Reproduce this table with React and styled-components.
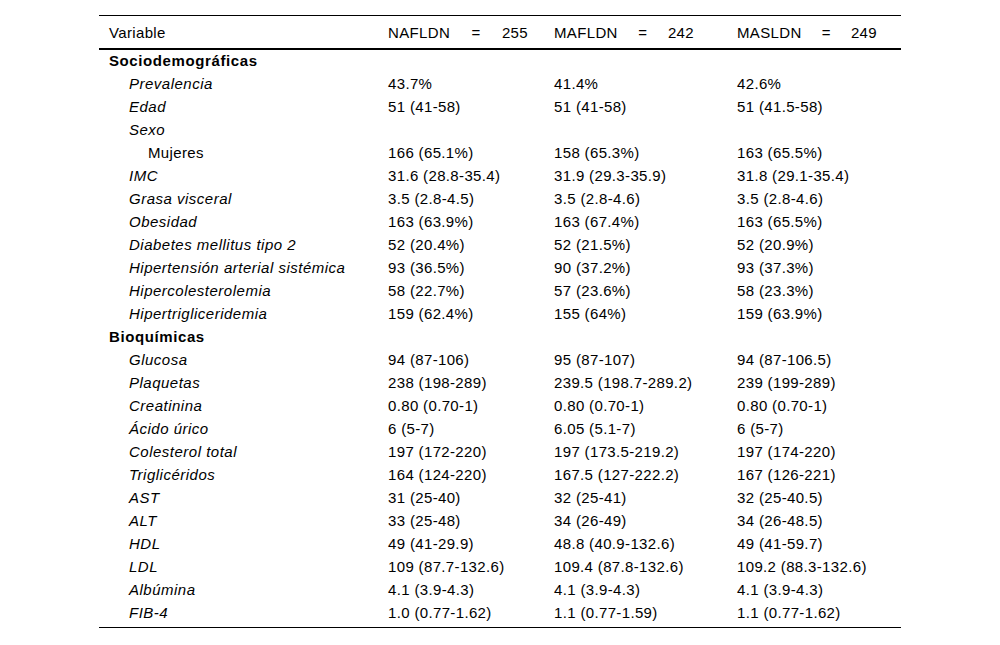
import styled, { createGlobalStyle } from 'styled-components'

const GlobalStyle = createGlobalStyle`
  body {
    margin: 0;
    background: #fff;
    color: #000;
    font-family: "Liberation Sans", Arial, sans-serif;
  }
`

const groups = [
  {
    title: 'Sociodemográficas',
    rows: [
      ['Prevalencia', '43.7%', '41.4%', '42.6%'],
      ['Edad', '51 (41-58)', '51 (41-58)', '51 (41.5-58)'],
      ['Sexo', '', '', ''],
      ['Mujeres', '166 (65.1%)', '158 (65.3%)', '163 (65.5%)', 2],
      ['IMC', '31.6 (28.8-35.4)', '31.9 (29.3-35.9)', '31.8 (29.1-35.4)'],
      ['Grasa visceral', '3.5 (2.8-4.5)', '3.5 (2.8-4.6)', '3.5 (2.8-4.6)'],
      ['Obesidad', '163 (63.9%)', '163 (67.4%)', '163 (65.5%)'],
      ['Diabetes mellitus tipo 2', '52 (20.4%)', '52 (21.5%)', '52 (20.9%)'],
      ['Hipertensión arterial sistémica', '93 (36.5%)', '90 (37.2%)', '93 (37.3%)'],
      ['Hipercolesterolemia', '58 (22.7%)', '57 (23.6%)', '58 (23.3%)'],
      ['Hipertrigliceridemia', '159 (62.4%)', '155 (64%)', '159 (63.9%)'],
    ],
  },
  {
    title: 'Bioquímicas',
    rows: [
      ['Glucosa', '94 (87-106)', '95 (87-107)', '94 (87-106.5)'],
      ['Plaquetas', '238 (198-289)', '239.5 (198.7-289.2)', '239 (199-289)'],
      ['Creatinina', '0.80 (0.70-1)', '0.80 (0.70-1)', '0.80 (0.70-1)'],
      ['Ácido úrico', '6 (5-7)', '6.05 (5.1-7)', '6 (5-7)'],
      ['Colesterol total', '197 (172-220)', '197 (173.5-219.2)', '197 (174-220)'],
      ['Triglicéridos', '164 (124-220)', '167.5 (127-222.2)', '167 (126-221)'],
      ['AST', '31 (25-40)', '32 (25-41)', '32 (25-40.5)'],
      ['ALT', '33 (25-48)', '34 (26-49)', '34 (26-48.5)'],
      ['HDL', '49 (41-29.9)', '48.8 (40.9-132.6)', '49 (41-59.7)'],
      ['LDL', '109 (87.7-132.6)', '109.4 (87.8-132.6)', '109.2 (88.3-132.6)'],
      ['Albúmina', '4.1 (3.9-4.3)', '4.1 (3.9-4.3)', '4.1 (3.9-4.3)'],
      ['FIB-4', '1.0 (0.77-1.62)', '1.1 (0.77-1.59)', '1.1 (0.77-1.62)'],
    ],
  },
]

const cohorts = [
  ['NAFLDN', '255'],
  ['MAFLDN', '242'],
  ['MASLDN', '249'],
]

const App = () => {
  return (
    <>
      <GlobalStyle />
      <Page>
        <Table>
          <colgroup>
            <col style={{ width: '279px' }} />
            <col style={{ width: '166px' }} />
            <col style={{ width: '183px' }} />
            <col style={{ width: '174px' }} />
          </colgroup>
          <thead>
            <tr>
              <HeadCell>Variable</HeadCell>
              {cohorts.map(([name, n]) => (
                <HeadCell key={name}>
                  <Cohort>
                    <span>{name}</span>
                    <span>=</span>
                    <span>{n}</span>
                  </Cohort>
                </HeadCell>
              ))}
            </tr>
          </thead>
          <tbody>
            {groups.map((g) => (
              <Group key={g.title} group={g} />
            ))}
            <Spacer><td colSpan={4} /></Spacer>
          </tbody>
        </Table>
      </Page>
    </>
  )
}

const Group = ({ group }) => (
  <>
    <tr>
      <Cell><Section>{group.title}</Section></Cell>
      <Cell />
      <Cell />
      <Cell />
    </tr>
    {group.rows.map(([label, a, b, c, level = 1]) => (
      <tr key={label}>
        <Cell>
          <Label $level={level}>{label}</Label>
        </Cell>
        <Cell>{a}</Cell>
        <Cell>{b}</Cell>
        <Cell>{c}</Cell>
      </tr>
    ))}
  </>
)

export default App

const Page = styled.div`
  padding-top: 15px;
`

const Table = styled.table`
  width: 802px;
  margin: 0 0 0 99px;
  table-layout: fixed;
  border-collapse: collapse;
  border-top: 1px solid #000;
  border-bottom: 1px solid #000;
  font-size: 15px;
  letter-spacing: 0.35px;
`

const HeadCell = styled.th`
  height: 33px;
  padding: 2px 0 0 10px;
  box-sizing: border-box;
  text-align: left;
  font-weight: normal;
  border-bottom: 2px solid #000;
  white-space: nowrap;
`

const Cohort = styled.span`
  display: inline-flex;
  justify-content: space-between;
  width: 140px;
`

const Cell = styled.td`
  height: 23px;
  padding: 0 0 0 10px;
  box-sizing: border-box;
  white-space: nowrap;
  vertical-align: middle;
`

const Section = styled.span`
  font-weight: bold;
  letter-spacing: 0.6px;
`

const Label = styled.span`
  display: inline-block;
  padding-left: ${({ $level }) => ($level === 2 ? 39 : 20)}px;
  font-style: ${({ $level }) => ($level === 2 ? 'normal' : 'italic')};
  letter-spacing: ${({ $level }) => ($level === 2 ? 0.35 : 0.5)}px;
`

const Spacer = styled.tr`
  height: 4px;
`
